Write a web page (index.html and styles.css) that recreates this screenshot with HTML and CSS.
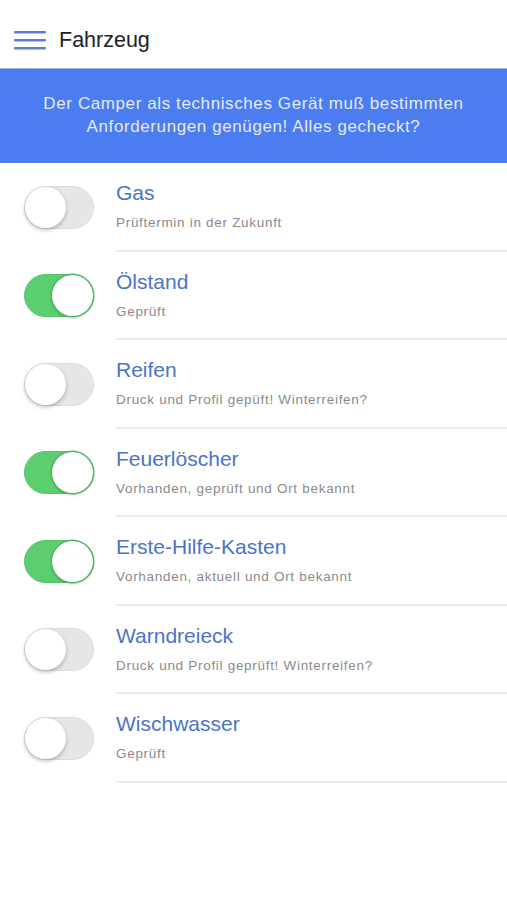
FILE: index.html
```html
<!DOCTYPE html>
<html lang="de">

<head>
  <meta charset="UTF-8" />
  <title>Fahrzeug</title>
  <link rel="stylesheet" href="styles.css">
</head>

<body>
  <header class="topbar">
    <svg class="menu-icon" width="32" height="20" viewBox="0 0 32 20">
      <rect x="0" y="1" width="32" height="2.5" rx="1" />
      <rect x="0" y="9" width="32" height="2.5" rx="1" />
      <rect x="0" y="17" width="32" height="2.5" rx="1" />
    </svg>
    <h1>Fahrzeug</h1>
  </header>

  <div class="banner">
    Der Camper als technisches Gerät muß bestimmten<br>
    Anforderungen genügen! Alles gecheckt?
  </div>

  <ul class="checklist">
    <li class="item">
      <div class="switch-cell"><span class="switch"></span></div>
      <div class="text">
        <div class="title">Gas</div>
        <div class="sub">Prüftermin in der Zukunft</div>
      </div>
    </li>
    <li class="item">
      <div class="switch-cell"><span class="switch on"></span></div>
      <div class="text">
        <div class="title">Ölstand</div>
        <div class="sub">Geprüft</div>
      </div>
    </li>
    <li class="item">
      <div class="switch-cell"><span class="switch"></span></div>
      <div class="text">
        <div class="title">Reifen</div>
        <div class="sub">Druck und Profil gepüft! Winterreifen?</div>
      </div>
    </li>
    <li class="item">
      <div class="switch-cell"><span class="switch on"></span></div>
      <div class="text">
        <div class="title">Feuerlöscher</div>
        <div class="sub">Vorhanden, geprüft und Ort bekannt</div>
      </div>
    </li>
    <li class="item">
      <div class="switch-cell"><span class="switch on"></span></div>
      <div class="text">
        <div class="title">Erste-Hilfe-Kasten</div>
        <div class="sub">Vorhanden, aktuell und Ort bekannt</div>
      </div>
    </li>
    <li class="item">
      <div class="switch-cell"><span class="switch"></span></div>
      <div class="text">
        <div class="title">Warndreieck</div>
        <div class="sub">Druck und Profil geprüft! Winterreifen?</div>
      </div>
    </li>
    <li class="item">
      <div class="switch-cell"><span class="switch"></span></div>
      <div class="text">
        <div class="title">Wischwasser</div>
        <div class="sub">Geprüft</div>
      </div>
    </li>
  </ul>
</body>

</html>
```

FILE: styles.css
```css
body {
  margin: 0;
  font-family: "Liberation Sans", Arial, sans-serif;
  background: #fff;
}

.topbar {
  height: 68px;
  box-sizing: border-box;
  display: flex;
  align-items: center;
  padding: 12px 0 0 14px;
}

.menu-icon {
  fill: #5a7fd2;
  margin-right: 13px;
}

.topbar h1 {
  margin: 0;
  font-size: 21.5px;
  font-weight: normal;
  color: #222;
}

.banner {
  height: 95px;
  box-sizing: border-box;
  background: #4b7cf0;
  border-top: 1px solid #9bb6f2;
  color: #e4ebfb;
  font-size: 17px;
  letter-spacing: 0.6px;
  line-height: 23px;
  text-align: center;
  padding-top: 23px;
}

.checklist {
  list-style: none;
  margin: 0;
  padding: 0;
}

.item {
  display: flex;
  height: 88.5px;
}

.switch-cell {
  width: 116px;
  display: flex;
  align-items: center;
  padding-left: 24px;
  box-sizing: border-box;
}

.switch {
  position: relative;
  width: 70px;
  height: 43px;
  border-radius: 22px;
  background: #e6e6e6;
  box-sizing: border-box;
  border: 1px solid #dcdcdc;
}

.switch::after {
  content: "";
  position: absolute;
  top: 0;
  left: 0;
  width: 41px;
  height: 41px;
  border-radius: 50%;
  background: #fff;
  box-shadow: 0 2px 4px rgba(0, 0, 0, 0.25);
}

.switch.on {
  background: #5dce70;
  border-color: #55c468;
}

.switch.on::after {
  left: auto;
  right: 0;
  box-shadow: 0 0 0 1.5px #4fb462, 0 2px 3px rgba(0, 0, 0, 0.2);
}

.text {
  flex: 1;
  border-bottom: 2px solid #ececec;
  padding-top: 17px;
}

.title {
  font-size: 21px;
  line-height: 26px;
  color: #4b73c8;
}

.sub {
  margin-top: 8px;
  font-size: 13.5px;
  line-height: 18px;
  letter-spacing: 0.7px;
  color: #8a8a8a;
}
```
